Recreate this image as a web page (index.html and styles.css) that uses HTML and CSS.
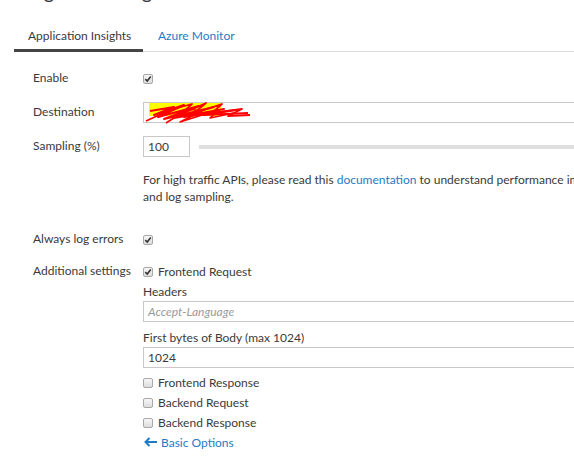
FILE: index.html
```html
<!DOCTYPE html>
<html lang="en">
<head>
<meta charset="utf-8">
<title>Diagnostics Logs</title>
<link rel="stylesheet" href="styles.css">
</head>
<body>
<div class="page">
  <h1 class="title">Diagnostics Logs</h1>
  <nav class="tabs">
    <span class="tab active">Application Insights</span>
    <span class="tab link">Azure Monitor</span>
  </nav>
  <div class="form">
    <div class="row r-enable">
      <div class="label">Enable</div>
      <div class="field"><div class="check"><span class="cb on"><svg viewBox="0 0 8 8" width="8" height="8"><path d="M1.3 4.2 L3.2 6 L6.8 1.6" fill="none" stroke="#333" stroke-width="1.6"/></svg></span></div></div>
    </div>
    <div class="row r-dest">
      <div class="label lbl-input">Destination</div>
      <div class="field">
        <div class="input dest">
          <svg class="scribble" width="110" height="26" viewBox="0 0 110 26">
            <rect x="5" y="2" width="72" height="13" fill="#ffff00"/>
            <path d="M6 10 L30 6 L10 14 L40 4 L14 16 L55 5 L20 18 L70 6 L30 17 L80 8 L40 16 L92 9 L60 14 L104 12" fill="none" stroke="#ff0000" stroke-width="2" stroke-linejoin="round"/>
            <path d="M2 20 L26 9 L48 3 L36 14 L62 2 L50 12 L78 3 L68 12 L98 8 L84 15 L106 14" fill="none" stroke="#ff0000" stroke-width="1.8" stroke-linejoin="round"/>
            <path d="M22 22 L44 8 L58 10 L36 21 L74 9 L66 17 L90 12" fill="none" stroke="#ff0000" stroke-width="1.6" stroke-linejoin="round"/>
          </svg>
        </div>
      </div>
    </div>
    <div class="row r-samp">
      <div class="label lbl-input">Sampling (%)</div>
      <div class="field">
        <div class="samp">
          <div class="input small">100</div>
          <div class="track"></div>
        </div>
        <p class="help">For high traffic APIs, please read this <a class="link">documentation</a> to understand performance implications<br>and log sampling.</p>
      </div>
    </div>
    <div class="row r-always">
      <div class="label">Always log errors</div>
      <div class="field"><div class="check"><span class="cb on"><svg viewBox="0 0 8 8" width="8" height="8"><path d="M1.3 4.2 L3.2 6 L6.8 1.6" fill="none" stroke="#333" stroke-width="1.6"/></svg></span></div></div>
    </div>
    <div class="row r-add">
      <div class="label">Additional settings</div>
      <div class="field">
        <div class="check"><span class="cb on"><svg viewBox="0 0 8 8" width="8" height="8"><path d="M1.3 4.2 L3.2 6 L6.8 1.6" fill="none" stroke="#333" stroke-width="1.6"/></svg></span><span>Frontend Request</span></div>
        <div class="sub">Headers</div>
        <div class="input placeholder">Accept-Language</div>
        <div class="sub sub2">First bytes of Body (max 1024)</div>
        <div class="input">1024</div>
        <div class="checks">
          <div class="check"><span class="cb"></span><span>Frontend Response</span></div>
          <div class="check"><span class="cb"></span><span>Backend Request</span></div>
          <div class="check"><span class="cb"></span><span>Backend Response</span></div>
          <div class="check back link"><svg class="arrow" width="13" height="10" viewBox="0 0 13 10"><path d="M13 5 H2 M5.5 1 L1.5 5 L5.5 9" fill="none" stroke="#1e7bc6" stroke-width="2"/></svg><span>Basic Options</span></div>
        </div>
      </div>
    </div>
  </div>
</div>
</body>
</html>
```
FILE: styles.css
```css
* { box-sizing: border-box; }
html, body { margin: 0; padding: 0; background: #fff; }
body {
  font-family: Lato, "Liberation Sans", sans-serif;
  font-size: 12px;
  color: #3a3a3a;
  overflow: hidden;
}
.page { width: 574px; height: 471px; overflow: hidden; }
.title {
  font-size: 20px;
  font-weight: normal;
  line-height: 24px;
  height: 24px;
  margin: -21px 0 0 14px;
  white-space: nowrap;
  color: #3a3a3a;
}
.link { color: #1e7bc6; }
.tabs {
  display: flex;
  margin: 18px 0 0 14px;
  height: 31px;
  border-bottom: 1px solid #dcdcdc;
}
.tab {
  height: 31px;
  margin-bottom: -1px;
  padding: 6px 0 0 15px;
  line-height: 18px;
  border-bottom: 3px solid transparent;
  white-space: nowrap;
}
.tab.active {
  width: 129px;
  padding-left: 14px;
  border-bottom-color: #444;
  color: #3a3a3a;
}
.form { width: 760px; padding: 16px 0 0 33px; }
.row { display: flex; }
.label { width: 110px; flex: none; line-height: 20px; white-space: nowrap; }
.lbl-input { line-height: 20px; }
.field { flex: 1; min-width: 0; }
.check { display: flex; align-items: center; height: 20px; white-space: nowrap; }
.cb {
  display: inline-flex;
  align-items: center;
  justify-content: center;
  width: 10px;
  height: 10px;
  margin: 1px 5px 0 0;
  border: 1px solid #a8a8a8;
  border-radius: 2px;
  background: linear-gradient(#f7f7f7, #dcdcdc);
  flex: none;
}
.cb svg { display: block; }
.input {
  height: 21px;
  border: 1px solid #c8c8c8;
  padding: 0 4px;
  line-height: 19px;
  color: #3a3a3a;
  background: #fff;
}
.r-dest { margin-top: 14px; }
.dest { position: relative; }
.scribble { position: absolute; left: 0; top: -2px; }
.r-samp { margin-top: 13px; }
.samp { display: flex; align-items: center; }
.input.small { width: 47px; flex: none; }
.track { flex: 1; height: 4px; margin-left: 9px; background: #dfdfdf; }
.help { margin: 14px 0 0; line-height: 17px; white-space: nowrap; }
.r-always { margin-top: 24px; }
.r-add { margin-top: 12px; }
.sub { line-height: 18px; margin-top: 2px; }
.sub2 { margin-top: 7px; }
.placeholder { font-style: italic; color: #9a9a9a; }
.checks { margin-top: 4px; }
.back .arrow { margin: 0 4px 0 1px; display: block; }
```
